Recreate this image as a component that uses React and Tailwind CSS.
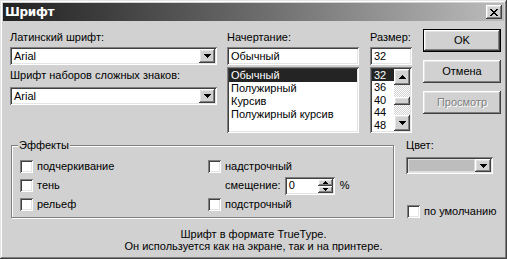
const raised = "shadow-[inset_-1px_-1px_#404040,inset_1px_1px_#ffffff,inset_-2px_-2px_#808080,inset_2px_2px_#e4e4e4]";
const sunken = "shadow-[inset_1px_1px_#808080,inset_-1px_-1px_#ffffff,inset_2px_2px_#404040,inset_-2px_-2px_#e4e4e4]";

function Arrow({ up }) {
    return (
        <svg width="7" height="4" viewBox="0 0 7 4" className="block">
            {up ? (
                <path d="M3 0h1v1h1v1h1v1h1v1H0V3h1V2h1V1h1z" fill="#000" />
            ) : (
                <path d="M0 0h7v1H6v1H5v1H4v1H3V3H2V2H1V1H0z" fill="#000" />
            )}
        </svg>
    );
}

function DropButton() {
    return (
        <div className={`w-[16px] h-full bg-[#d1d1d1] flex items-center justify-center ${raised}`}>
            <Arrow />
        </div>
    );
}

function Combo({ value }) {
    return (
        <div className={`h-[18px] bg-white flex items-center p-[2px] ${sunken}`}>
            <span className="flex-1 pl-[2px]">{value}</span>
            <DropButton />
        </div>
    );
}

function Check({ label }) {
    return (
        <div className="flex items-center h-[19px] whitespace-nowrap">
            <span className={`w-[13px] h-[13px] bg-white shrink-0 ${sunken}`}></span>
            <span className="ml-[4px]">{label}</span>
        </div>
    );
}

function Button({ children, isDefault, disabled }) {
    return (
        <div className={`h-[23px] flex items-center justify-center ${isDefault ? 'border border-black' : ''}`}>
            <div className={`w-full h-full flex items-center justify-center bg-[#d1d1d1] ${raised}`}>
                <span className={disabled ? 'text-[#808080] [text-shadow:1px_1px_0_#ffffff]' : ''}>{children}</span>
            </div>
        </div>
    );
}

function Scrollbar() {
    return (
        <div className="w-[16px] h-full flex flex-col shrink-0">
            <div className={`h-[16px] bg-[#d1d1d1] flex items-center justify-center ${raised}`}>
                <Arrow up />
            </div>
            <div className="h-[12px] bg-[repeating-conic-gradient(#ffffff_0%_25%,#d1d1d1_0%_50%)] bg-[length:2px_2px]"></div>
            <div className={`h-[8px] bg-[#d1d1d1] ${raised}`}></div>
            <div className="flex-1 bg-[repeating-conic-gradient(#ffffff_0%_25%,#d1d1d1_0%_50%)] bg-[length:2px_2px]"></div>
            <div className={`h-[16px] bg-[#d1d1d1] flex items-center justify-center ${raised}`}>
                <Arrow />
            </div>
        </div>
    );
}

export default function App() {
    const styles = ['Обычный', 'Полужирный', 'Курсив', 'Полужирный курсив'];
    const sizes = ['32', '36', '40', '44', '48'];

    return (
        <div className={`w-[507px] h-[259px] bg-[#d1d1d1] p-[3px] flex flex-col overflow-hidden text-[11px] leading-[13px] text-black font-['Liberation_Sans',Arial,sans-serif] shadow-[inset_-1px_-1px_#404040,inset_1px_1px_#e4e4e4,inset_-2px_-2px_#808080,inset_2px_2px_#ffffff]`}>
            {/* Title bar */}
            <div className="h-[18px] shrink-0 flex items-center pl-[2px] pr-[2px] bg-gradient-to-r from-[#222222] to-[#bdbdbd]">
                <span className="text-white font-bold text-[12px] font-['DejaVu_Sans',sans-serif] tracking-[-0.3px]">Шрифт</span>
                <div className={`ml-auto w-[16px] h-[14px] bg-[#d1d1d1] flex items-center justify-center ${raised}`}>
                    <svg width="8" height="7" viewBox="0 0 8 7" className="block">
                        <path d="M0 0h2v1h1v1h2V1h1V0h2v1H7v1H6v1H5v1h1v1h1v1h1v1H6V6H5V5H3v1H2v1H0V6h1V5h1V4h1V3H2V2H1V1H0z" fill="#000" />
                    </svg>
                </div>
            </div>

            {/* Body */}
            <div className="flex-1 flex flex-col pl-[7px] pt-[8px]">
                <div className="flex items-start">
                    {/* Latin / complex fonts */}
                    <div className="w-[207px] pt-[2px] flex flex-col">
                        <span>Латинский шрифт:</span>
                        <div className="mt-[3px]"><Combo value="Arial" /></div>
                        <span className="mt-[4px]">Шрифт наборов сложных знаков:</span>
                        <div className="mt-[5px]"><Combo value="Arial" /></div>
                    </div>

                    {/* Style */}
                    <div className="w-[132px] ml-[10px] pt-[2px] flex flex-col">
                        <span>Начертание:</span>
                        <div className={`mt-[3px] h-[18px] bg-white flex items-center pl-[4px] ${sunken}`}>Обычный</div>
                        <div className={`mt-[2px] h-[66px] bg-white p-[2px] overflow-hidden ${sunken}`}>
                            {styles.map((s, i) => (
                                <div key={s} className={`h-[13px] pl-[2px] ${i === 0 ? 'bg-[#242424] text-white' : ''}`}>{s}</div>
                            ))}
                        </div>
                    </div>

                    {/* Size */}
                    <div className="w-[42px] ml-[11px] pt-[2px] flex flex-col">
                        <span>Размер:</span>
                        <div className={`mt-[3px] h-[18px] bg-white flex items-center pl-[4px] ${sunken}`}>32</div>
                        <div className={`mt-[2px] h-[66px] bg-white p-[2px] flex overflow-hidden ${sunken}`}>
                            <div className="flex-1 overflow-hidden">
                                {sizes.map((s, i) => (
                                    <div key={s} className={`h-[12.4px] leading-[12px] pl-[2px] ${i === 0 ? 'bg-[#242424] text-white' : ''}`}>{s}</div>
                                ))}
                            </div>
                            <Scrollbar />
                        </div>
                    </div>

                    {/* Buttons */}
                    <div className="w-[78px] ml-[11px] flex flex-col gap-[8px]">
                        <Button isDefault>OK</Button>
                        <Button>Отмена</Button>
                        <Button disabled>Просмотр</Button>
                    </div>
                </div>

                {/* Effects + colour */}
                <div className="flex items-start mt-[6px]">
                    <div className="ml-[1px] w-[383px] pt-[6px]">
                        <div className="relative h-[73px] border border-[#808080] shadow-[inset_1px_1px_#ffffff,1px_1px_#ffffff] pt-[11px] pl-[8px] flex">
                            <span className="absolute top-[-7px] left-[6px] px-[1px] bg-[#d1d1d1]">Эффекты</span>
                            <div className="w-[188px] flex flex-col">
                                <Check label="подчеркивание" />
                                <Check label="тень" />
                                <Check label="рельеф" />
                            </div>
                            <div className="flex flex-col">
                                <Check label="надстрочный" />
                                <div className="flex items-center h-[19px] pl-[17px]">
                                    <span>смещение:</span>
                                    <div className={`ml-[4px] w-[50px] h-[18px] bg-white flex items-center p-[2px] ${sunken}`}>
                                        <span className="flex-1 pl-[2px]">0</span>
                                        <div className="w-[15px] h-full flex flex-col">
                                            <div className={`flex-1 bg-[#d1d1d1] flex items-center justify-center ${raised}`}>
                                                <svg width="5" height="3" viewBox="0 0 5 3" className="block"><path d="M2 0h1v1h1v1h1v1H0V2h1V1h1z" fill="#000" /></svg>
                                            </div>
                                            <div className={`flex-1 bg-[#d1d1d1] flex items-center justify-center ${raised}`}>
                                                <svg width="5" height="3" viewBox="0 0 5 3" className="block"><path d="M0 0h5v1H4v1H3v1H2V2H1V1H0z" fill="#000" /></svg>
                                            </div>
                                        </div>
                                    </div>
                                    <span className="ml-[5px]">%</span>
                                </div>
                                <Check label="подстрочный" />
                            </div>
                        </div>
                    </div>

                    <div className="w-[87px] ml-[12px] flex flex-col">
                        <span>Цвет:</span>
                        <div className={`mt-[5px] h-[17px] bg-[#dcdcdc] flex items-center p-[2px] ${sunken}`}>
                            <div className="flex-1 h-full p-[1px]">
                                <div className="w-full h-full bg-[#bdbdbd]"></div>
                            </div>
                            <DropButton />
                        </div>
                        <div className="mt-[28px] pl-[1px]">
                            <Check label="по умолчанию" />
                        </div>
                    </div>
                </div>

                {/* Description */}
                <div className="mt-[7px] text-center leading-[12px] pr-[7px]">
                    <div>Шрифт в формате TrueType.</div>
                    <div>Он используется как на экране, так и на принтере.</div>
                </div>
            </div>
        </div>
    );
}
